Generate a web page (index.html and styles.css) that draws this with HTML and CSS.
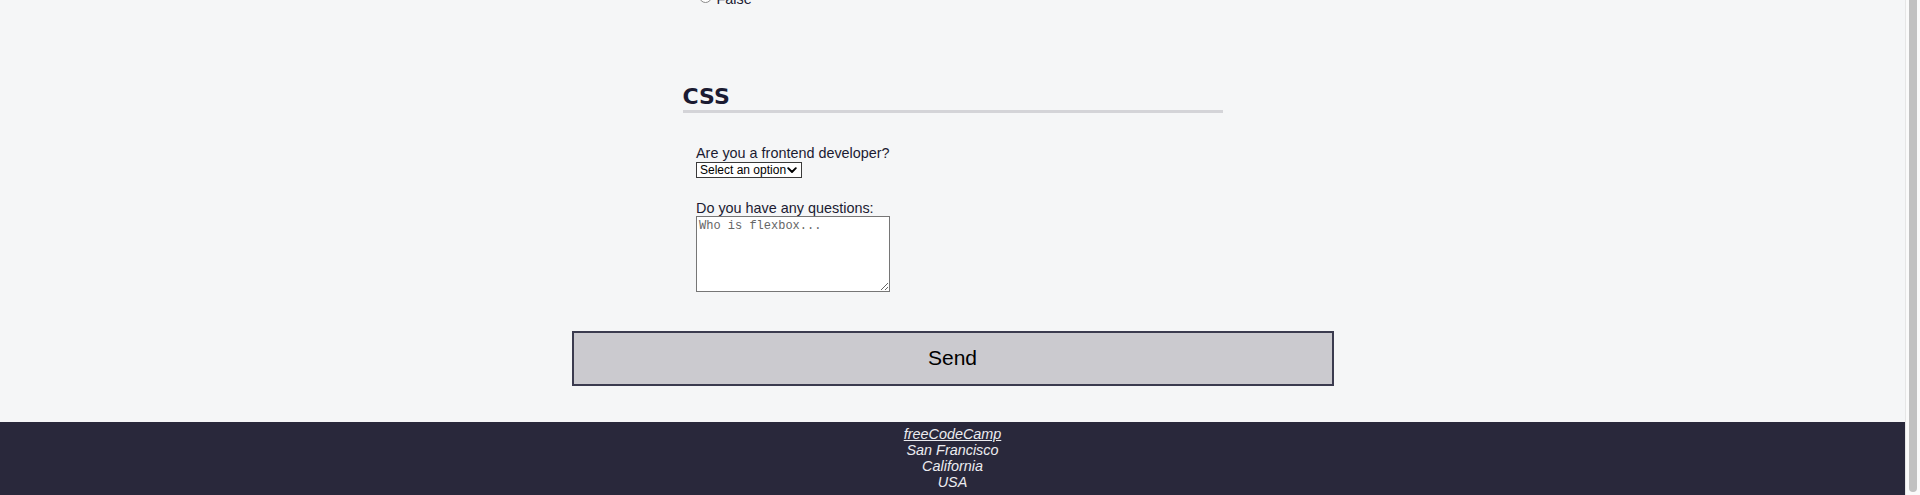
FILE: index.html
```html
<!DOCTYPE html>
<html lang="en">
<head>
<meta charset="utf-8">
<title>Quiz</title>
<link rel="stylesheet" href="styles.css">
</head>
<body>
<div class="window">
  <div class="page">
    <main class="main">
      <form class="form">
        <div class="fields prev">
          <label class="radio-row"><input type="radio" name="q3" class="radio"><span>False</span></label>
        </div>
        <section class="section">
          <h2 class="section-title">CSS</h2>
          <div class="fields">
            <div class="field first">
              <label class="label" for="dev">Are you a frontend developer?</label>
              <span class="select-wrap">
                <select id="dev" class="select">
                  <option>Select an option</option>
                  <option>Yes</option>
                  <option>No</option>
                </select>
                <svg class="chevron" width="10" height="7" viewBox="0 0 10 7"><path d="M1.2 1.2 L5 5 L8.8 1.2" fill="none" stroke="#000" stroke-width="1.9" stroke-linecap="round" stroke-linejoin="round"/></svg>
              </span>
            </div>
            <div class="field second">
              <label class="label tight" for="q">Do you have any questions:</label>
              <textarea id="q" class="textarea" placeholder="Who is flexbox..."></textarea>
            </div>
          </div>
        </section>
        <button type="button" class="send">Send</button>
      </form>
    </main>
    <footer class="footer">
      <address class="address">
        <a class="link" href="#">freeCodeCamp</a><br>
        San Francisco<br>
        California<br>
        USA
      </address>
    </footer>
  </div>
  <div class="scrollbar"><div class="thumb"></div></div>
</div>
</body>
</html>
```

FILE: styles.css
```css
html, body {
  margin: 0;
  padding: 0;
  height: 495px;
  overflow: hidden;
}
body {
  font-family: "Liberation Sans", Arial, sans-serif;
  color: #1b1b32;
  background: #f5f6f7;
}
.window {
  display: flex;
  height: 495px;
}
.page {
  flex: 1;
  display: flex;
  flex-direction: column;
  background: #f5f6f7;
  min-width: 0;
}
.main {
  flex: 1;
  overflow: hidden;
}
.form {
  margin: 0;
}
.section, .prev {
  width: 540px;
  margin: 0 auto;
}
.prev {
  box-sizing: border-box;
  padding-left: 13.5px;
  margin-top: -9px;
}
.radio-row {
  display: flex;
  align-items: flex-start;
  font-size: 14.4px;
  line-height: 16.5px;
}
.radio {
  appearance: none;
  -webkit-appearance: none;
  box-sizing: border-box;
  width: 13px;
  height: 13px;
  margin: -1px 4.5px 0 3px;
  border: 1px solid #8a8a8a;
  border-radius: 50%;
  background: #fff;
}
.section-title {
  margin: 77px 0 0;
  font-family: "DejaVu Sans", Verdana, sans-serif;
  font-weight: bold;
  font-size: 22px;
  line-height: 24px;
  padding-bottom: 1.5px;
  border-bottom: 3px solid #d4d4d8;
  color: #1b1b32;
}
.fields {
  padding-left: 13.5px;
}
.field.first {
  margin-top: 32px;
}
.field.second {
  margin-top: 23.5px;
}
.label {
  display: block;
  font-size: 14.4px;
  line-height: 16.5px;
}
.label.tight {
  line-height: 15px;
}
.select-wrap {
  position: relative;
  display: block;
  width: 106px;
}
.select {
  appearance: none;
  -webkit-appearance: none;
  display: block;
  box-sizing: border-box;
  width: 106px;
  height: 16px;
  margin: 0;
  padding: 0 0 0 3px;
  border: 1px solid #3a3a3a;
  border-radius: 0;
  background: #fff;
  color: #000;
  font-family: "Liberation Sans", Arial, sans-serif;
  font-size: 12px;
  line-height: 14px;
}
.chevron {
  position: absolute;
  right: 5px;
  top: 5px;
  pointer-events: none;
}
.textarea {
  display: block;
  box-sizing: border-box;
  width: 194px;
  height: 76px;
  margin: 0;
  padding: 2px 2px;
  border: 1px solid #767676;
  border-radius: 0;
  background: #fff;
  font-family: "Liberation Mono", "Courier New", monospace;
  font-size: 12px;
  line-height: 14px;
  color: #000;
}
.textarea::placeholder {
  color: #666;
}
.send {
  display: block;
  box-sizing: border-box;
  width: 762px;
  height: 55px;
  margin: 38.5px auto 0;
  border: 2px solid #3b3b4f;
  border-radius: 0;
  background: #cbcacf;
  color: #000;
  font-family: "Liberation Sans", Arial, sans-serif;
  font-size: 21px;
  padding: 0;
}
.footer {
  height: 73px;
  flex: none;
  box-sizing: border-box;
  padding-top: 4px;
  background: #29283b;
  color: #ececf0;
  text-align: center;
}
.address {
  font-style: italic;
  font-size: 14.4px;
  line-height: 16px;
}
.link {
  color: #ececf0;
  text-decoration: underline;
}
.scrollbar {
  flex: none;
  width: 15px;
  box-sizing: border-box;
  border-left: 1px solid #e6e6e6;
  background: #fafafa;
  padding-left: 3px;
}
.thumb {
  width: 8px;
  height: 492px;
  background: #c1c1c1;
  border-radius: 0 0 4px 4px;
}
```
